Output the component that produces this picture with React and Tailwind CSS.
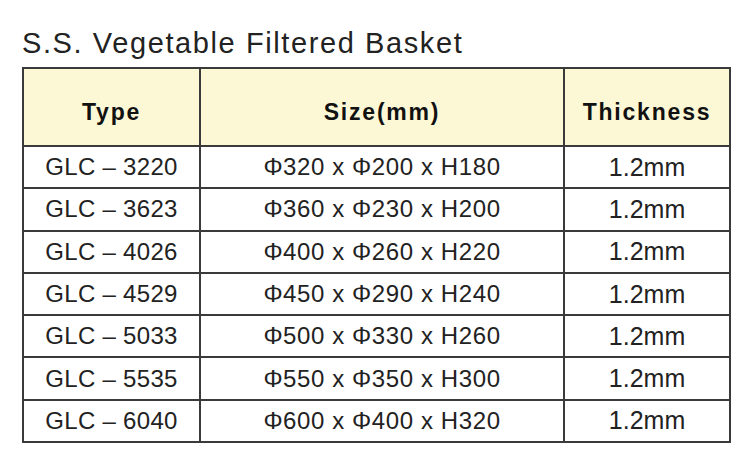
import React from "react";

const rows = [
  ["GLC – 3220", "Φ320 x Φ200 x H180"],
  ["GLC – 3623", "Φ360 x Φ230 x H200"],
  ["GLC – 4026", "Φ400 x Φ260 x H220"],
  ["GLC – 4529", "Φ450 x Φ290 x H240"],
  ["GLC – 5033", "Φ500 x Φ330 x H260"],
  ["GLC – 5535", "Φ550 x Φ350 x H300"],
  ["GLC – 6040", "Φ600 x Φ400 x H320"],
];

export default function App() {
  return (
    <div className="w-[750px] h-[473px] bg-white pl-[22px] pt-[27px] font-['Liberation_Sans',Arial,sans-serif]">
      <div className="text-[29px] leading-[33px] tracking-[1.6px] text-[#222] whitespace-nowrap">
        S.S. Vegetable Filtered Basket
      </div>
      <table className="mt-[7px] border-collapse w-[707px] table-fixed">
        <colgroup>
          <col className="w-[177px]" />
          <col className="w-[364px]" />
          <col className="w-[166px]" />
        </colgroup>
        <thead>
          <tr className="h-[78px] bg-[#fcf8d6]">
            <th className="border-2 border-[#3a3a3a] text-[23px] font-bold tracking-[1.8px] text-[#111] text-center pt-[11px]">Type</th>
            <th className="border-2 border-[#3a3a3a] text-[23px] font-bold tracking-[1.8px] text-[#111] text-center pt-[11px]">Size(mm)</th>
            <th className="border-2 border-[#3a3a3a] text-[23px] font-bold tracking-[1.8px] text-[#111] text-center pt-[11px]">Thickness</th>
          </tr>
        </thead>
        <tbody>
          {rows.map(([t, s]) => (
            <tr key={t} className="h-[42.3px]">
              <td className="border-2 border-[#3a3a3a] text-[24px] leading-none text-[#222] text-center tracking-[0.3px]">{t}</td>
              <td className="border-2 border-[#3a3a3a] text-[24px] leading-none text-[#222] text-center tracking-[0.6px] whitespace-nowrap">{s}</td>
              <td className="border-2 border-[#3a3a3a] text-[25px] leading-none text-[#222] text-center">1.2mm</td>
            </tr>
          ))}
        </tbody>
      </table>
    </div>
  );
}
